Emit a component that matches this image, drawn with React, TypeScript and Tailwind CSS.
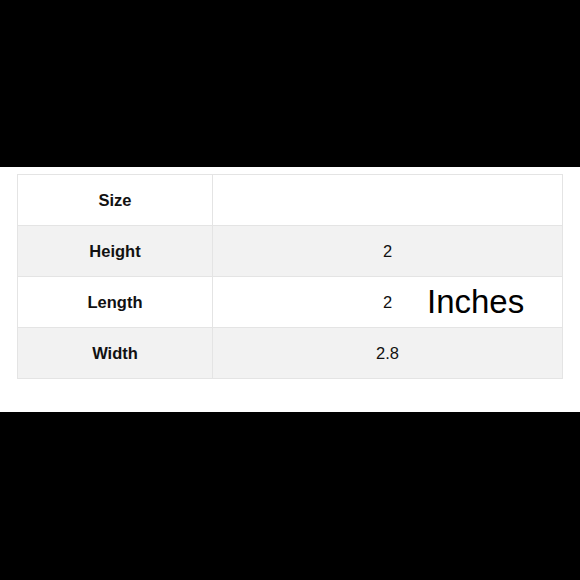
import React from "react";

const rows = [
  { label: "Size", value: "" },
  { label: "Height", value: "2" },
  { label: "Length", value: "2" },
  { label: "Width", value: "2.8" },
];

export default function App() {
  return (
    <div className="w-[580px] h-[580px] bg-black font-['Liberation_Sans',Arial,sans-serif] text-[#111]">
      <div className="h-[167px]" />
      <div className="bg-white h-[245px] px-[17px] pt-[7px]">
        <div className="relative">
          <table className="w-full border-collapse table-fixed">
            <colgroup>
              <col className="w-[195px]" />
              <col />
            </colgroup>
            <tbody>
              {rows.map((r, i) => (
                <tr key={r.label} className={i % 2 === 1 ? "bg-[#f2f2f2] h-[51px]" : "bg-white h-[51px]"}>
                  <td className="border border-[#e4e4e4] text-center font-bold text-[16.5px]">{r.label}</td>
                  <td className="border border-[#e4e4e4] text-center text-[16.5px]">{r.value}</td>
                </tr>
              ))}
            </tbody>
          </table>
          {/* label dropped on top of the table */}
          <span className="absolute left-[410px] top-[111px] text-[33px] leading-none text-black">Inches</span>
        </div>
      </div>
    </div>
  );
}
